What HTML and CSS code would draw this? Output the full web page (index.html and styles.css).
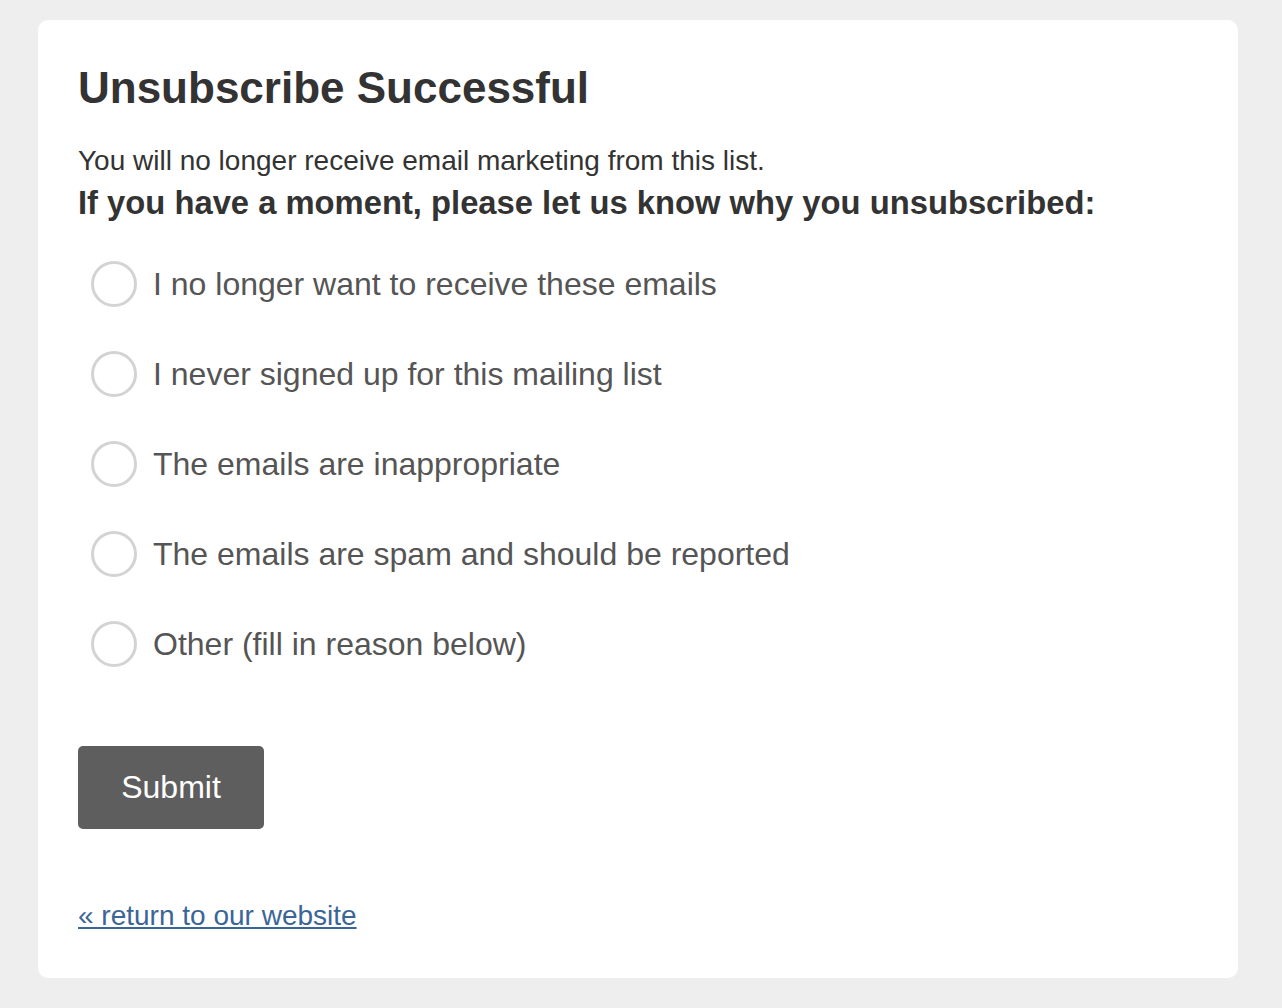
FILE: index.html
```html
<!DOCTYPE html>
<html>
<head>
<meta charset="utf-8">
<link rel="stylesheet" href="styles.css">
</head>
<body>
<div class="card">
  <h1 class="title">Unsubscribe Successful</h1>
  <p class="intro">You will no longer receive email marketing from this list.</p>
  <p class="ask">If you have a moment, please let us know why you unsubscribed:</p>
  <form class="reasons">
    <label class="reason"><input type="radio" name="r" class="radio"><span>I no longer want to receive these emails</span></label>
    <label class="reason"><input type="radio" name="r" class="radio"><span>I never signed up for this mailing list</span></label>
    <label class="reason"><input type="radio" name="r" class="radio"><span>The emails are inappropriate</span></label>
    <label class="reason"><input type="radio" name="r" class="radio"><span>The emails are spam and should be reported</span></label>
    <label class="reason"><input type="radio" name="r" class="radio"><span>Other (fill in reason below)</span></label>
    <button type="button" class="submit">Submit</button>
  </form>
  <a class="back" href="#">« return to our website</a>
</div>
</body>
</html>
```
FILE: styles.css
```css
html, body {
  margin: 0;
  padding: 0;
  background: #eeeeee;
  font-family: "Liberation Sans", Arial, sans-serif;
  color: #333333;
}
body {
  padding: 20px 44px 30px 38px;
}
.card {
  background: #ffffff;
  border-radius: 10px;
  padding: 40px 40px 46px 40px;
  display: flex;
  flex-direction: column;
  align-items: flex-start;
}
.title {
  margin: 0;
  font-size: 44px;
  line-height: 56px;
  font-weight: bold;
  color: #333333;
}
.intro {
  margin: 29px 0 0 0;
  font-size: 28px;
  line-height: 32px;
}
.ask {
  margin: 8px 0 0 0;
  font-size: 32.75px;
  line-height: 36px;
  font-weight: bold;
}
.reasons {
  margin: 18px 0 0 0;
  display: flex;
  flex-direction: column;
  align-items: flex-start;
}
.reason {
  display: flex;
  align-items: center;
  height: 90px;
  padding-left: 13px;
  font-size: 32px;
  color: #555555;
  cursor: pointer;
}
.radio {
  appearance: none;
  -webkit-appearance: none;
  margin: 0 16px 0 0;
  width: 46px;
  height: 46px;
  border: 3px solid #d3d3d3;
  border-radius: 50%;
  box-sizing: border-box;
  background: #ffffff;
}
.submit {
  margin-top: 57px;
  width: 186px;
  height: 83px;
  border: none;
  border-radius: 5px;
  background: #5e5e5e;
  color: #ffffff;
  font-family: "Liberation Sans", Arial, sans-serif;
  font-size: 32px;
}
.back {
  margin-top: 71px;
  font-size: 28px;
  line-height: 32px;
  color: #3b6597;
  text-decoration: underline;
}
```
